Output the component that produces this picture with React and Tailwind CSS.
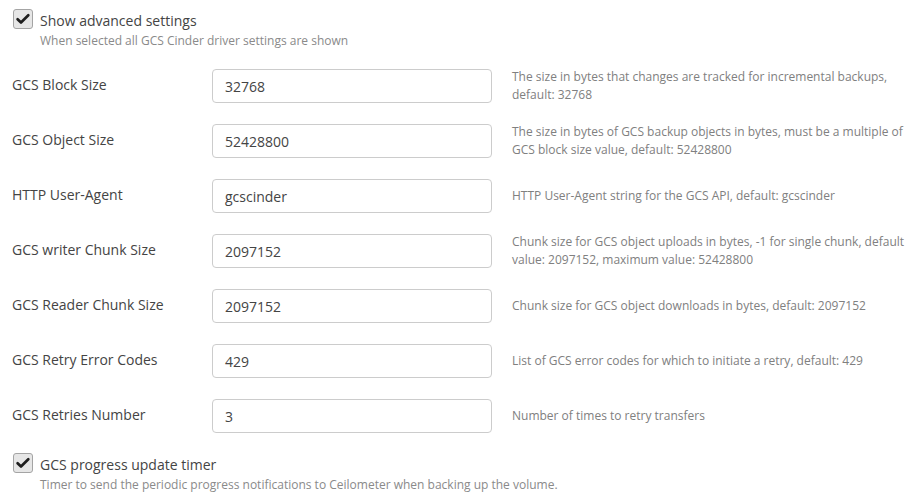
import React from "react";

const rows = [
  ["GCS Block Size", "32768", ["The size in bytes that changes are tracked for incremental backups,", "default: 32768"]],
  ["GCS Object Size", "52428800", ["The size in bytes of GCS backup objects in bytes, must be a multiple of", "GCS block size value, default: 52428800"]],
  ["HTTP User-Agent", "gcscinder", ["HTTP User-Agent string for the GCS API, default: gcscinder"]],
  ["GCS writer Chunk Size", "2097152", ["Chunk size for GCS object uploads in bytes, -1 for single chunk, default", "value: 2097152, maximum value: 52428800"]],
  ["GCS Reader Chunk Size", "2097152", ["Chunk size for GCS object downloads in bytes, default: 2097152"]],
  ["GCS Retry Error Codes", "429", ["List of GCS error codes for which to initiate a retry, default: 429"]],
  ["GCS Retries Number", "3", ["Number of times to retry transfers"]],
];

function Check() {
  return (
    <span className="block w-[20px] h-[20px] shrink-0 rounded-[3px] border border-solid border-[#a4a4a4] bg-[#e6e6e6]">
      <svg width="18" height="18" viewBox="0 0 18 18" className="block">
        <path d="M3.6 9.2 L7 12.5 L14.3 5.3" fill="none" stroke="#1e1e1e" strokeWidth="2.7" strokeLinecap="round" strokeLinejoin="round" />
      </svg>
    </span>
  );
}

function CheckRow({ label, desc }) {
  return (
    <div className="flex">
      <Check />
      <div className="ml-[7px] pt-[2px]">
        <div className="text-[14px] leading-[20px] text-[#444]">{label}</div>
        <div className="text-[12px] leading-[18px] text-[#8a8a8a] mt-[1px]">{desc}</div>
      </div>
    </div>
  );
}

export default function App() {
  return (
    <div className="w-[909px] h-[499px] bg-white overflow-hidden pl-[13px] pt-[9px]" style={{ fontFamily: '"Open Sans", sans-serif' }}>
      <CheckRow label="Show advanced settings" desc="When selected all GCS Cinder driver settings are shown" />
      <div className="flex flex-col gap-[21px] mt-[19px] -ml-px">
        {rows.map(([label, value, help]) => (
          <div key={label} className="flex items-center h-[34px]">
            <div className="w-[200px] shrink-0 text-[14px] text-[#444] -mt-[3px]">{label}</div>
            <div className="w-[280px] h-[34px] shrink-0 border border-[#ccc] rounded-[4px] flex items-center px-[12px] text-[14px] text-[#444]">
              {value}
            </div>
            <div className="ml-[20px] text-[12px] leading-[18px] text-[#808080]">
              {help.map((l) => (
                <div key={l}>{l}</div>
              ))}
            </div>
          </div>
        ))}
      </div>
      <div className="mt-[20px]">
        <CheckRow label="GCS progress update timer" desc="Timer to send the periodic progress notifications to Ceilometer when backing up the volume." />
      </div>
    </div>
  );
}
